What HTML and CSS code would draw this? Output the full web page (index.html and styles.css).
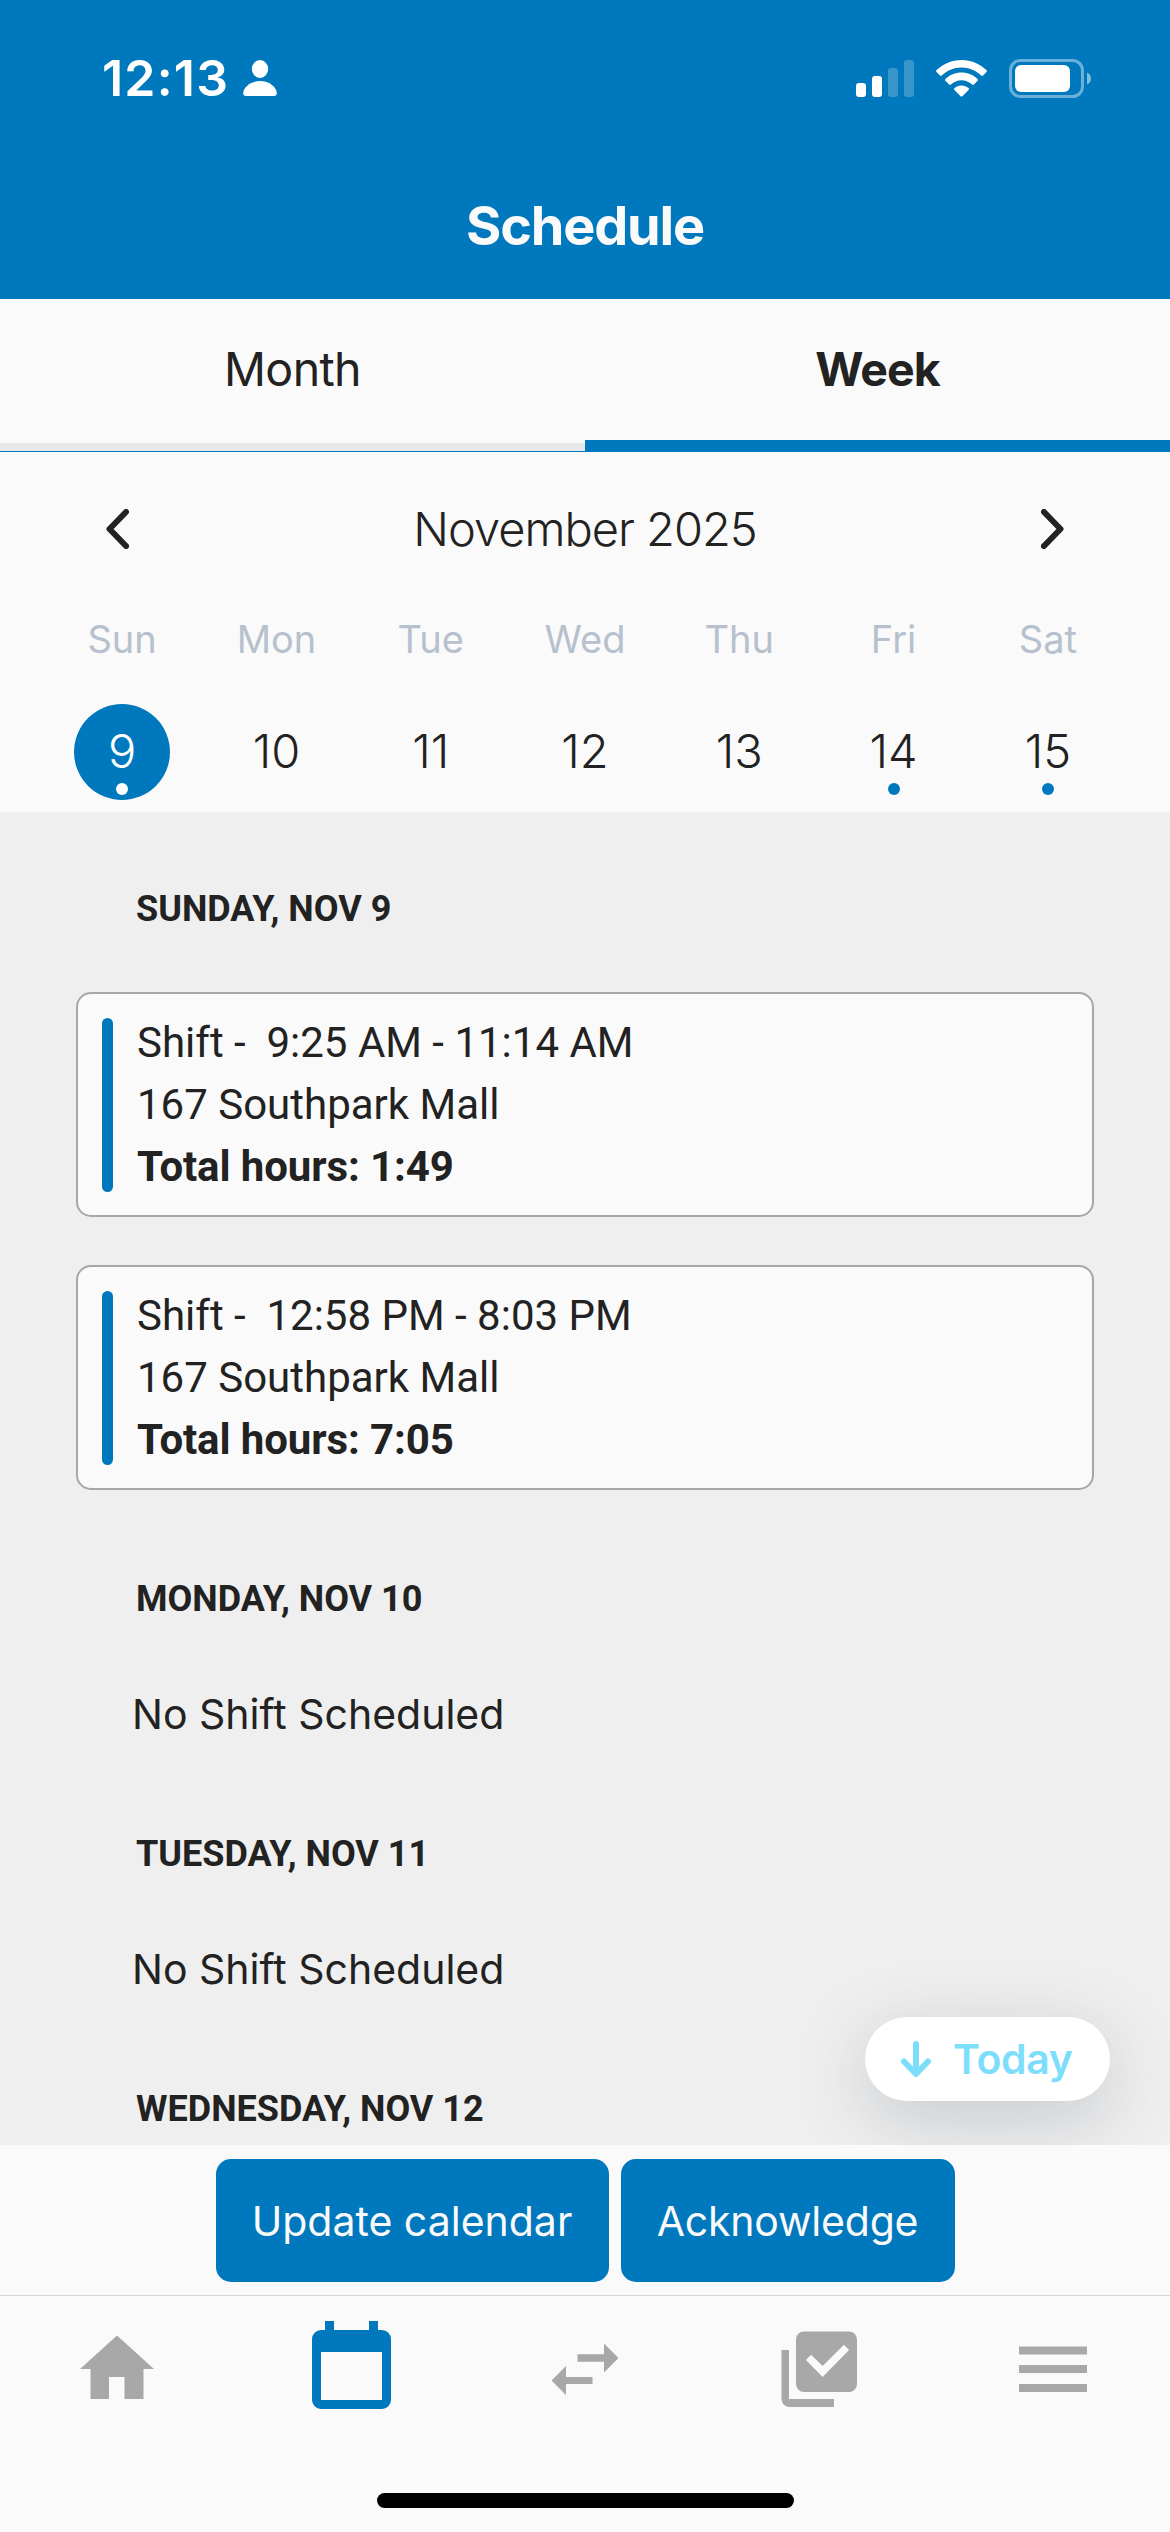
FILE: index.html
```html
<!DOCTYPE html>
<html lang="en">
<head>
<meta charset="utf-8">
<title>Schedule</title>
<link rel="stylesheet" href="styles.css">
</head>
<body>
<div class="screen">
  <header class="header">
    <div class="status">
      <span class="clock">12:13</span>
      <svg class="person" viewBox="0 0 34 36"><ellipse cx="17" cy="9" rx="8.2" ry="9"/><path d="M17 21c9.500 0 16.800 6.500 16.800 12.200 0 1.700-1 2.800-2.800 2.800H3C1.200 36 .2 34.900.2 33.200.2 27.500 7.500 21 17 21z"/></svg>
      <svg class="signal" viewBox="0 0 58 37"><rect x="0" y="23" width="10" height="14" rx="3"/><rect x="16" y="16" width="10" height="21" rx="3"/><g opacity=".22"><rect x="32" y="8" width="10" height="29" rx="3"/><rect x="48" y="0" width="10" height="37" rx="3"/></g></svg>
      <svg class="wifi" viewBox="0 0 51 37"><path d="M25.500 0C35.300 0 44 3.900 50.400 10.100c.6.600.6 1.300.1 1.900l-3.500 3.500c-.5.500-1.200.500-1.800 0C40 10.600 33.200 7.500 25.500 7.500S11 10.600 5.800 15.500c-.6.500-1.300.500-1.800 0L.5 12c-.5-.6-.5-1.300.1-1.900C7 3.900 15.700 0 25.500 0z"/><path d="M25.500 12.500c6.200 0 11.800 2.400 16 6.400.600.600.600 1.300.1 1.900l-3.700 3.700c-.5.500-1.200.500-1.800 0-2.800-2.600-6.500-4.200-10.600-4.200s-7.800 1.600-10.600 4.200c-.6.500-1.300.500-1.800 0l-3.700-3.700c-.5-.6-.5-1.300.1-1.900 4.200-4 9.800-6.400 16-6.400z"/><path d="M25.500 25.400c2.700 0 5.100 1 7 2.600.6.600.6 1.300.1 1.900l-6.200 6.300c-.5.500-1.300.5-1.800 0l-6.200-6.300c-.5-.6-.5-1.300.1-1.900 1.900-1.600 4.300-2.600 7-2.600z"/></svg>
      <svg class="battery" viewBox="0 0 82 39"><rect x="1.500" y="1.500" width="72" height="36" rx="10" fill="none" stroke="#fff" stroke-width="3" opacity=".42"/><rect x="6" y="6" width="55" height="27" rx="6"/><path d="M78 13.500c2.500 1 4 3.300 4 6s-1.500 5-4 6z" opacity=".5"/></svg>
    </div>
    <h1 class="title">Schedule</h1>
  </header>

  <nav class="tabs">
    <div class="tab">Month</div>
    <div class="tab active">Week</div>
  </nav>

  <section class="calendar">
    <div class="month-row">
      <svg class="chevron" viewBox="0 0 24 40"><path d="M21 3L4.500 20 21 37"/></svg>
      <span class="month-name">November 2025</span>
      <svg class="chevron" viewBox="0 0 24 40"><path d="M3 3l16.500 17L3 37"/></svg>
    </div>
    <div class="week-grid names">
      <span>Sun</span><span>Mon</span><span>Tue</span><span>Wed</span><span>Thu</span><span>Fri</span><span>Sat</span>
    </div>
    <div class="week-grid days">
      <div class="day selected"><span>9</span><i class="dot"></i></div>
      <div class="day"><span>10</span></div>
      <div class="day"><span>11</span></div>
      <div class="day"><span>12</span></div>
      <div class="day"><span>13</span></div>
      <div class="day"><span>14</span><i class="dot"></i></div>
      <div class="day"><span>15</span><i class="dot"></i></div>
    </div>
  </section>

  <main class="agenda">
    <h2 class="date first">SUNDAY, NOV 9</h2>
    <article class="card">
      <div class="stripe"></div>
      <div class="info"><p class="time">Shift - &nbsp;9:25 AM - 11:14 AM</p><p>167 Southpark Mall</p><p class="total">Total hours: 1:49</p></div>
    </article>
    <article class="card">
      <div class="stripe"></div>
      <div class="info"><p class="time">Shift - &nbsp;12:58 PM - 8:03 PM</p><p>167 Southpark Mall</p><p class="total">Total hours: 7:05</p></div>
    </article>
    <h2 class="date after-cards">MONDAY, NOV 10</h2>
    <p class="empty">No Shift Scheduled</p>
    <h2 class="date">TUESDAY, NOV 11</h2>
    <p class="empty">No Shift Scheduled</p>
    <h2 class="date">WEDNESDAY, NOV 12</h2>
    <button class="today">
      <svg class="arrow" viewBox="0 0 30 36"><path d="M15 3v29M3 20.500L15 33l12-12.500"/></svg>
      <span>Today</span>
    </button>
  </main>

  <div class="actions">
    <button class="btn update">Update calendar</button>
    <button class="btn ack">Acknowledge</button>
  </div>

  <nav class="bottom">
    <svg class="icon" viewBox="0 0 96 96"><path d="M48 18.500L85 52H74.500V82h-19V60H40v22H21.500V52H11z"/></svg>
    <svg class="icon current" viewBox="0 0 96 96"><path fill-rule="evenodd" d="M22 4h9v9h35V4h9v9h4a9 9 0 0 1 9 9v61a9 9 0 0 1-9 9H18a9 9 0 0 1-9-9V22a9 9 0 0 1 9-9h4zM18 35v48h61V35z"/></svg>
    <svg class="icon" viewBox="0 0 96 96"><path d="M14.500 63.500L29 49v11h26.500v7H29v11zM40.500 37.200H67V26.500L81.500 41 67 55.500V44.800H40.500z"/></svg>
    <svg class="icon" viewBox="0 0 96 96"><path fill-rule="evenodd" d="M33 14.500h45a8 8 0 0 1 8 8V67a8 8 0 0 1-8 8H33a8 8 0 0 1-8-8V22.500a8 8 0 0 1 8-8zM35 43l16.600 17L78 33l-5-5.200L51.600 49 40 37.800zM10.500 33H18v49h45v8H18.500a8 8 0 0 1-8-8z"/></svg>
    <svg class="icon" viewBox="0 0 96 96"><path d="M14 29.500h68v8H14zM14 48h68v8H14zM14 67h68v8H14z"/></svg>
  </nav>
  <div class="home-indicator"></div>
</div>
</body>
</html>
```
FILE: styles.css
```css
* { box-sizing: border-box; margin: 0; padding: 0; }

body {
  width: 1170px;
  height: 2532px;
  overflow: hidden;
  font-family: Inter, "Liberation Sans", sans-serif;
  color: #222;
  background: #fafafa;
}

button { border: 0; font: inherit; }
svg { display: block; flex: none; }

.screen { display: flex; flex-direction: column; width: 1170px; height: 2532px; }

/* Header */
.header { height: 299px; background: #0078bd; color: #fff; }
.status { display: flex; height: 156px; padding: 0 79px 0 102px; align-items: center; fill: #fff; }
.clock { width: 141px; font-size: 50px; font-weight: 600; letter-spacing: 1.2px; white-space: nowrap; }
.person { width: 34px; height: 36px; }
.signal { width: 58px; height: 37px; margin-left: auto; }
.wifi { width: 51px; height: 37px; margin-left: 22px; }
.battery { width: 82px; height: 39px; margin-left: 22px; }
.title { font-size: 54px; font-weight: 700; line-height: 140px; text-align: center; color: #fafafa; letter-spacing: -1.2px; }

/* Month / week switch */
.tabs { display: flex; height: 153px; flex: none; }
.tab { flex: 1; padding-top: 40px; text-align: center; font-size: 46.500px; line-height: 60px; letter-spacing: -0.6px; border-bottom: 1px solid #0078bd; box-shadow: inset 0 -8px #e6e8ea; }
.tab.active { font-weight: 700; letter-spacing: -1px; border-bottom: 12px solid #0078bd; box-shadow: none; }

/* Week strip */
.calendar { height: 360px; padding: 0 45px; flex: none; }
.month-row { display: flex; justify-content: space-between; align-items: center; height: 153px; padding: 0 60px; }
.chevron { width: 24px; height: 40px; fill: none; stroke: #222; stroke-width: 6; stroke-linecap: round; stroke-linejoin: round; }
.month-name { font-size: 47px; font-weight: 300; letter-spacing: -1px; }
.week-grid { display: grid; grid-template-columns: repeat(7, 1fr); justify-items: center; }
.names { height: 99px; font-size: 38px; line-height: 68px; color: #b6c1cd; }
.day { display: flex; flex-direction: column; align-items: center; width: 96px; height: 96px; padding-top: 17px; font-size: 47px; line-height: 60px; font-weight: 300; border-radius: 50%; }
.dot { width: 12px; height: 12px; margin-top: 2px; border-radius: 50%; background: #0078bd; }
.selected { background: #0078bd; color: #fff; }
.selected .dot { background: #fff; }

/* Agenda */
.agenda { position: relative; height: 1333px; flex: none; overflow: hidden; padding: 0 76px; background: #efefef; }
.date { margin: 94px 0 0 60px; font: 700 36px/42px Roboto, sans-serif; height: 42px; white-space: nowrap; }
.date.first { margin-top: 76px; margin-bottom: 62px; }
.date.after-cards { margin-top: 88px; }
.card { display: flex; height: 225px; margin-bottom: 48px; padding: 24px; gap: 24px; border: 2px solid #a7a7a7; border-radius: 15px; background: #fafafa; }
.stripe { width: 11px; height: 174px; border-radius: 6px; background: #0078bd; }
.info { font: 400 42px/62px Roboto, sans-serif; white-space: nowrap; margin-top: -6px; }
.total { font-weight: 700; letter-spacing: -0.1px; }
.empty { margin: 69px 0 0 56px; font-size: 41px; line-height: 50px; }
.today { position: absolute; left: 865px; top: 1205px; display: flex; align-items: center; width: 245px; height: 84px; padding-left: 36px; gap: 22px; border-radius: 42px; background: #fff; color: #7cdefb; font-size: 41px; font-weight: 600; letter-spacing: -0.4px; box-shadow: 0 18px 72px rgba(67, 81, 95, .24); }
.arrow { width: 30px; height: 36px; fill: none; stroke: #7cdefb; stroke-width: 6; stroke-linecap: round; stroke-linejoin: round; }

/* Actions */
.actions { display: flex; justify-content: center; gap: 12px; height: 150px; padding-top: 14px; flex: none; }
.btn { height: 123px; border-radius: 15px; background: #0078bd; color: #fafafa; font-size: 41px; }
.update { width: 393px; }
.ack { width: 334px; letter-spacing: -0.2px; }

/* Bottom bar */
.bottom { display: flex; justify-content: space-around; height: 198px; padding: 21px 0 0; border-top: 1px solid #d6d6d6; fill: #a8a8a8; flex: none; }
.icon { width: 96px; height: 96px; }
.icon.current { fill: #0078bd; }
.home-indicator { width: 417px; height: 15px; margin: 0 auto; border-radius: 8px; background: #000; }
```
